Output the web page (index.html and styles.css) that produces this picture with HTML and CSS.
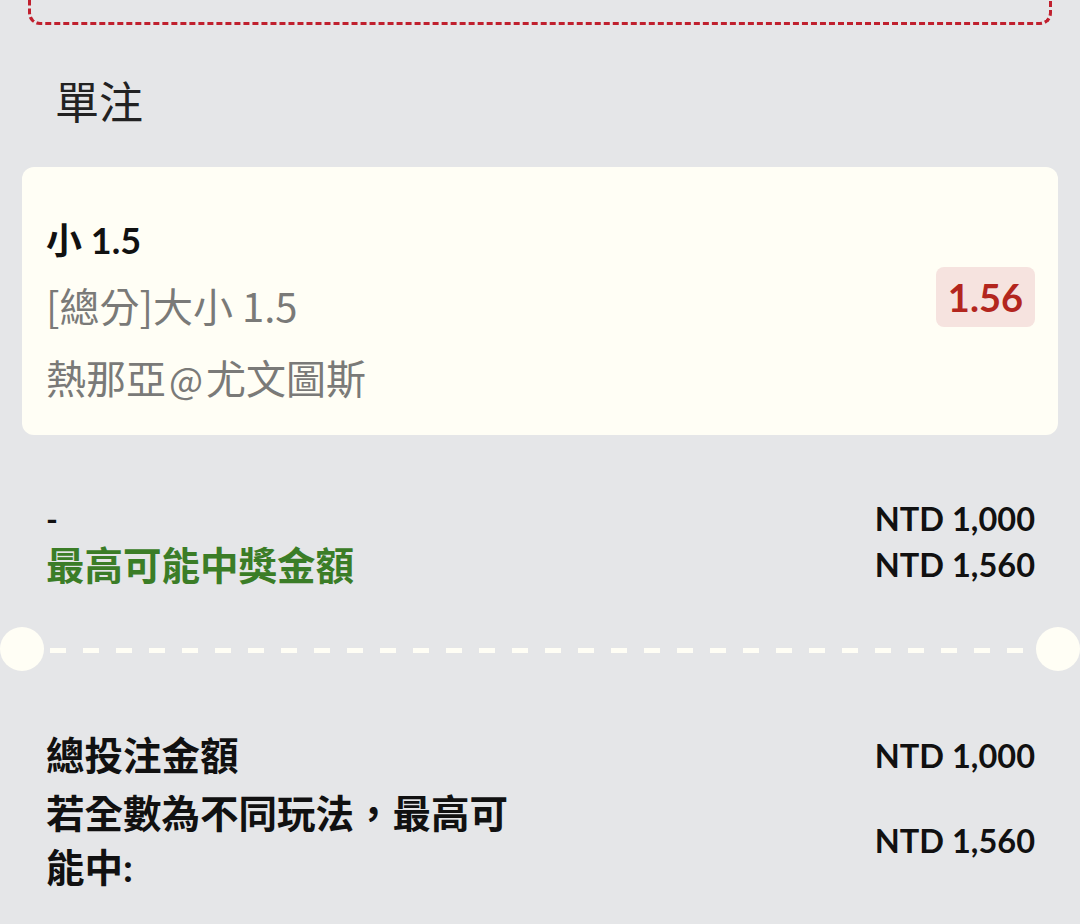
FILE: index.html
```html
<!DOCTYPE html>
<html lang="zh-Hant">
<head>
  <meta charset="UTF-8" />
  <meta name="viewport" content="width=device-width, initial-scale=1.0"/>
  <title>單注</title>
  <link rel="stylesheet" href="styles.css">
</head>
<body>

  <!-- Caja superior (continúa fuera de pantalla) -->
  <div class="caja-superior"></div>

  <h2 class="titulo">單注</h2>

  <!-- Apuesta -->
  <div class="tarjeta">
    <div class="tarjeta-info">
      <div class="seleccion">小 1.5</div>
      <div class="mercado">[總分]大小 1.5</div>
      <div class="partido">熱那亞 <span class="arroba">@</span> 尤文圖斯</div>
    </div>
    <div class="cuota">1.56</div>
  </div>

  <div class="montos">
    <div class="fila">
      <span>-</span>
      <span class="valor">NTD 1,000</span>
    </div>
    <div class="fila">
      <span class="premio">最高可能中獎金額</span>
      <span class="valor">NTD 1,560</span>
    </div>
  </div>

  <!-- Separador tipo ticket -->
  <div class="separador">
    <span class="hueco"></span>
    <span class="linea"></span>
    <span class="hueco"></span>
  </div>

  <div class="totales">
    <div class="fila">
      <span class="etiqueta">總投注金額</span>
      <span class="valor">NTD 1,000</span>
    </div>
    <div class="fila">
      <span class="etiqueta">若全數為不同玩法，最高可能中:</span>
      <span class="valor">NTD 1,560</span>
    </div>
  </div>

</body>
</html>
```

FILE: styles.css
```css
body {
  font-family: "Lato", "Noto Sans CJK TC", sans-serif;
  background: #e5e6e8;
  margin: 0;
  padding: 0;
  color: #111;
}

.caja-superior {
  margin: -40px 28px 0;
  height: 62px;
  border: 3px dashed #c0202e;
  border-top: none;
  border-radius: 0 0 12px 12px;
}

.titulo {
  margin: 47px 0 0;
  padding-left: 55px;
  font-size: 44px;
  font-weight: normal;
  line-height: 60px;
  color: #222;
}

.tarjeta {
  margin: 35px 22px 0;
  padding: 48px 23px 30px 24px;
  background: #fffef5;
  border-radius: 12px;
  display: flex;
  justify-content: space-between;
  align-items: center;
}

.seleccion {
  font-size: 36px;
  font-weight: bold;
  line-height: 50px;
}

.mercado,
.partido {
  font-family: "Noto Sans CJK TC", sans-serif;
  font-size: 40px;
  line-height: 56px;
  color: #7a7a78;
}

.mercado {
  margin-top: 12px;
}

.partido {
  margin-top: 16px;
  word-spacing: -6px;
}

.arroba {
  font-size: 36px;
  line-height: 1;
}

.cuota {
  background: #f6e3df;
  color: #b3261e;
  font-size: 38px;
  font-weight: bold;
  line-height: 60px;
  padding: 0 12px;
  border-radius: 8px;
  margin-top: -26px;
}

.montos {
  margin-top: 61px;
  padding: 0 45px 0 46px;
}

.fila {
  display: flex;
  justify-content: space-between;
  align-items: center;
  font-weight: bold;
}

.montos .fila {
  font-size: 32px;
  line-height: 46px;
}

.valor {
  font-size: 32.5px;
  font-weight: bold;
  white-space: nowrap;
}

.premio {
  font-size: 38.5px;
  color: #3b7d27;
}

.separador {
  margin-top: 39px;
  display: flex;
  align-items: center;
}

.hueco {
  width: 44px;
  height: 44px;
  border-radius: 50%;
  background: #fffef5;
  flex-shrink: 0;
}

.linea {
  flex: 1;
  height: 5px;
  margin: 2px 6px 0;
  background: repeating-linear-gradient(to right, #fffef5 0 16px, transparent 16px 33px);
}

.totales {
  margin-top: 57px;
  padding: 0 45px 0 46px;
  display: flex;
  flex-direction: column;
  gap: 4px;
}

.etiqueta {
  font-size: 38.5px;
  line-height: 54px;
  max-width: 490px;
}
```
